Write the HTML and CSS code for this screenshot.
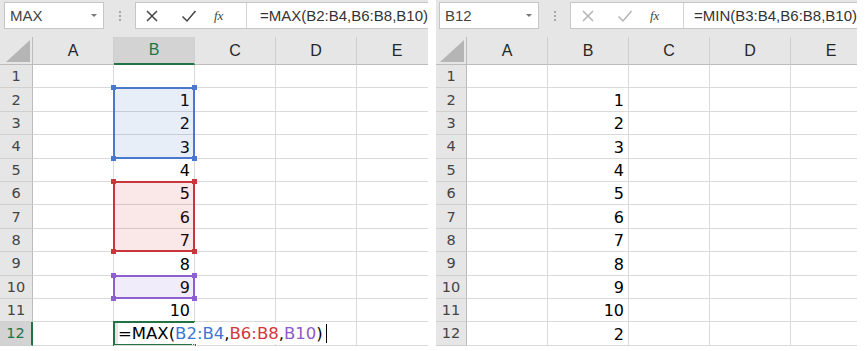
FILE: index.html
```html
<!DOCTYPE html>
<html lang="ja">
<head>
  <meta charset="UTF-8" />
  <title>MAX / MIN</title>
  <link rel="stylesheet" href="styles.css">
</head>
<body>
  <div class="screen">
    <section class="book book-left">
      <div class="fbar">
        <div class="namebox"><span>MAX</span><i class="drop"></i></div>
        <div class="grip"><i></i><i></i><i></i></div>
        <div class="fbox">
          <div class="btns">
            <svg class="ico" width="14" height="14" viewBox="0 0 14 14"><path d="M2 2 L12 12 M12 2 L2 12" /></svg>
            <svg class="ico" width="16" height="14" viewBox="0 0 16 14"><path d="M1.5 7.5 L6 12 L14.5 2" /></svg>
            <span class="fx">fx</span>
          </div>
          <div class="formula">=MAX(B2:B4,B6:B8,B10)</div>
        </div>
      </div>
      <div class="sheet" id="sheetLeft"></div>
    </section>

    <section class="book book-right">
      <div class="fbar">
        <div class="namebox"><span>B12</span><i class="drop"></i></div>
        <div class="grip"><i></i><i></i><i></i></div>
        <div class="fbox">
          <div class="btns off">
            <svg class="ico" width="14" height="14" viewBox="0 0 14 14"><path d="M2 2 L12 12 M12 2 L2 12" /></svg>
            <svg class="ico" width="16" height="14" viewBox="0 0 16 14"><path d="M1.5 7.5 L6 12 L14.5 2" /></svg>
            <span class="fx">fx</span>
          </div>
          <div class="formula">=MIN(B3:B4,B6:B8,B10)</div>
        </div>
      </div>
      <div class="sheet" id="sheetRight"></div>
    </section>
  </div>

  <script>
    document.addEventListener('DOMContentLoaded', function () {
      const cols = ['A', 'B', 'C', 'D', 'E'];

      const left = {
        values: ['', 1, 2, 3, 4, 5, 6, 7, 8, 9, 10, null],
        activeRow: 12,
        activeCol: 'B',
        ranges: [
          { from: 2, to: 4, color: 'blue' },
          { from: 6, to: 8, color: 'red' },
          { from: 10, to: 10, color: 'purple' }
        ],
        editor: '=MAX(<span class="ref-blue">B2:B4</span>,<span class="ref-red">B6:B8</span>,<span class="ref-purple">B10</span>)<i class="cursor"></i>'
      };

      const right = {
        values: ['', 1, 2, 3, 4, 5, 6, 7, 8, 9, 10, 2],
        ranges: []
      };

      // every item gets an explicit slot so the overlays don't push cells around
      function add(sheet, cls, text, row, col) {
        const cell = document.createElement('div');
        cell.className = cls;
        if (text !== undefined && text !== null) cell.innerHTML = text;
        cell.style.gridRow = row;
        cell.style.gridColumn = col;
        sheet.appendChild(cell);
        return cell;
      }

      function build(sheet, data) {
        const corner = add(sheet, 'corner', '', 1, 1);
        corner.innerHTML = '<svg width="24" height="22" viewBox="0 0 24 22"><polygon points="24,0 24,22 0,22" /></svg>';

        cols.forEach((c, i) => {
          add(sheet, c === data.activeCol ? 'colhead sel' : 'colhead', c, 1, i + 2);
        });

        for (let r = 1; r <= 12; r++) {
          add(sheet, r === data.activeRow ? 'rowhead sel' : 'rowhead', r, r + 1, 1);
          cols.forEach((c, i) => {
            if (c === 'B' && r === data.activeRow && data.editor) {
              add(sheet, 'cell editing', '<span class="editor">' + data.editor + '</span>', r + 1, i + 2);
            } else {
              const v = c === 'B' ? data.values[r - 1] : '';
              add(sheet, 'cell', v, r + 1, i + 2);
            }
          });
        }

        data.ranges.forEach(rg => {
          const box = add(sheet, 'range ' + rg.color, '', (rg.from + 1) + ' / ' + (rg.to + 2), 3);
          box.innerHTML = '<i class="h tl"></i><i class="h tr"></i><i class="h bl"></i><i class="h br"></i>';
        });

        if (data.activeRow) {
          const act = add(sheet, 'active', '', data.activeRow + 1, 3);
          act.innerHTML = '<i class="fill"></i>';
        }
      }

      build(document.getElementById('sheetLeft'), left);
      build(document.getElementById('sheetRight'), right);
    });
  </script>
</body>
</html>
```

FILE: styles.css
```css
* {
    box-sizing: border-box;
}
body {
    margin: 0;
    background-color: #fff;
    font-family: "Liberation Sans", Arial, sans-serif;
}
.screen {
    display: flex;
    gap: 8px;
    width: 865px;
    height: 351px;
}
.book {
    background-color: #e6e6e6;
    height: 346px;
    overflow: hidden;
}
.book-left {
    width: 428px;
}
.book-right {
    width: 421px;
}

/* formula bar */
.fbar {
    display: flex;
    align-items: center;
    height: 33px;
    padding: 0 0 2px 4px;
}
.book-right .fbar {
    padding-left: 3px;
}
.namebox {
    width: 101px;
    height: 27px;
    background-color: #fff;
    border: 1px solid #c6c6c6;
    display: flex;
    align-items: center;
    justify-content: space-between;
    padding: 0 6px 0 5px;
    font-size: 15px;
    color: #444;
}
.drop {
    width: 0;
    height: 0;
    border-left: 3px solid transparent;
    border-right: 3px solid transparent;
    border-top: 3px solid #777;
}
.grip {
    width: 31px;
    display: flex;
    flex-direction: column;
    align-items: center;
    gap: 2px;
}
.grip i {
    width: 2px;
    height: 2px;
    background-color: #a8a8a8;
}
.fbox {
    flex: 1;
    height: 27px;
    display: flex;
    background-color: #fff;
    border: 1px solid #c6c6c6;
    border-right: none;
}
.btns {
    width: 111px;
    display: flex;
    align-items: center;
    padding-left: 9px;
    border-right: 1px solid #d4d4d4;
}
.book-right .btns {
    width: 113px;
    padding-left: 10px;
}
.ico {
    fill: none;
    stroke: #444;
    stroke-width: 1.5;
    margin-right: 22px;
}
.ico + .ico {
    margin-right: 17px;
}
.btns.off .ico {
    stroke: #b4b4b4;
}
.fx {
    font-family: "Liberation Serif", "Times New Roman", serif;
    font-style: italic;
    font-size: 13px;
    color: #444;
}
.formula {
    padding-left: 13px;
    font-size: 15px;
    line-height: 25px;
    color: #333;
    white-space: nowrap;
}
.book-right .formula {
    padding-left: 10px;
}

/* grid */
.sheet {
    display: grid;
    grid-template-columns: 33px repeat(5, 81px);
    grid-template-rows: 28px repeat(12, 23.4px);
    margin-top: 4px;
}
.book-right .sheet {
    grid-template-columns: 31px repeat(5, 81px);
}
.corner {
    display: flex;
    align-items: flex-end;
    justify-content: flex-end;
    padding: 0 2px 2px 0;
    border-right: 1px solid #bcbcbc;
    border-bottom: 1px solid #bcbcbc;
}
.corner polygon {
    fill: #b5b5b5;
}
.colhead {
    display: flex;
    align-items: center;
    justify-content: center;
    font-size: 16px;
    color: #262626;
    border-right: 1px solid #cfcfcf;
    border-bottom: 1px solid #bcbcbc;
}
.colhead.sel {
    background-color: #d3d3d3;
    color: #217346;
    border-bottom: 2px solid #217346;
}
.rowhead {
    display: flex;
    align-items: center;
    justify-content: center;
    font-family: "DejaVu Sans", sans-serif;
    font-size: 14.5px;
    color: #444;
    border-right: 1px solid #bcbcbc;
    border-bottom: 1px solid #d0d0d0;
}
.rowhead.sel {
    background-color: #d3d3d3;
    color: #217346;
    border-right: 2px solid #217346;
}
.cell {
    background-color: #fff;
    border-right: 1px solid #dadada;
    border-bottom: 1px solid #dadada;
    display: flex;
    align-items: flex-end;
    justify-content: flex-end;
    padding: 0 4px 0 0;
    font-family: "DejaVu Sans", sans-serif;
    font-size: 16px;
    line-height: 21px;
    color: #000;
}
.cell.editing {
    position: relative;
    z-index: 4;
    justify-content: flex-start;
    padding: 0 0 0 4px;
    align-items: center;
    background-color: transparent;
}
.editor {
    white-space: nowrap;
    background-color: #fff;
    font-size: 16.5px;
    padding-right: 4px;
    display: flex;
    align-items: center;
}
.ref-blue {
    color: #3b77d4;
}
.ref-red {
    color: #d0383b;
}
.ref-purple {
    color: #8e5bc8;
}
.cursor {
    display: inline-block;
    width: 1px;
    height: 19px;
    margin-left: 3px;
    background-color: #000;
}

/* referenced ranges */
.range {
    position: relative;
    z-index: 1;
    margin: -1px 0 0 -1px;
    border: 2px solid;
}
.range.blue {
    border-color: #4a78cc;
    background-color: rgba(68, 114, 196, 0.12);
}
.range.red {
    border-color: #c8383b;
    background-color: rgba(214, 64, 64, 0.12);
}
.range.purple {
    border-color: #8d5fcf;
    background-color: rgba(143, 95, 208, 0.12);
}
.h {
    position: absolute;
    width: 5px;
    height: 5px;
}
.range.blue .h {
    background-color: #4a78cc;
}
.range.red .h {
    background-color: #c8383b;
}
.range.purple .h {
    background-color: #8d5fcf;
}
.tl { left: -4px; top: -4px; }
.tr { right: -4px; top: -4px; }
.bl { left: -4px; bottom: -4px; }
.br { right: -4px; bottom: -4px; }

.active {
    position: relative;
    z-index: 3;
    margin: -1px 0 0 -1px;
    border: 2px solid #217346;
}
.fill {
    position: absolute;
    right: -4px;
    bottom: -4px;
    width: 5px;
    height: 5px;
    background-color: #217346;
    border: 1px solid #fff;
}
```
